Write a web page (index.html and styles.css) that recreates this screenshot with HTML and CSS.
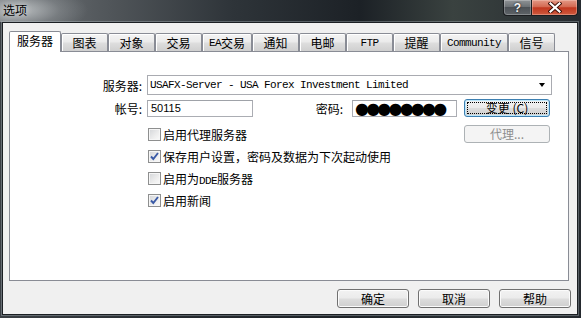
FILE: index.html
```html
<!DOCTYPE html>
<html lang="zh-CN">
<head>
<meta charset="utf-8">
<title>选项</title>
<link rel="stylesheet" href="styles.css">
</head>
<body>
<div class="window">
  <header class="titlebar">
    <span class="title">选项</span>
    <div class="caption">
      <span class="cap-btn cap-help">?</span>
      <span class="cap-btn cap-close">
        <svg width="14" height="11" viewBox="0 0 14 11"><path d="M2.5 1.5 L11.5 9.5 M11.5 1.5 L2.5 9.5" stroke="#3a0b04" stroke-width="4" stroke-linecap="square"/><path d="M2.5 1.5 L11.5 9.5 M11.5 1.5 L2.5 9.5" stroke="#ffffff" stroke-width="2.2" stroke-linecap="square"/></svg>
      </span>
    </div>
  </header>
  <main class="client">
    <nav class="tabs">
      <span class="tab active">服务器</span>
      <span class="tab">图表</span>
      <span class="tab">对象</span>
      <span class="tab">交易</span>
      <span class="tab"><span class="asc">EA</span>交易</span>
      <span class="tab">通知</span>
      <span class="tab">电邮</span>
      <span class="tab"><span class="asc">FTP</span></span>
      <span class="tab">提醒</span>
      <span class="tab"><span class="asc">Community</span></span>
      <span class="tab">信号</span>
    </nav>
    <section class="panel">
      <div class="row row-server">
        <label class="lbl">服务器:</label>
        <div class="combo">
          <span class="combo-text">USAFX-Server - USA Forex Investment Limited</span>
          <span class="combo-arrow"></span>
        </div>
      </div>
      <div class="row row-login">
        <label class="lbl">帐号:</label>
        <div class="field field-login">50115</div>
        <label class="lbl-pw">密码:</label>
        <div class="field field-pw">●●●●●●●●</div>
        <button class="btn btn-focus"><span class="focus-rect">变更 (C)</span></button>
      </div>
      <div class="row row-check">
        <span class="check"></span><span class="check-text">启用代理服务器</span>
        <button class="btn btn-disabled">代理...</button>
      </div>
      <div class="row row-check">
        <span class="check on"><svg width="11" height="11" viewBox="0 0 11 11"><path d="M2 5.5 L4.3 8 L9 2" fill="none" stroke="#3a5aa6" stroke-width="1.9"/></svg></span><span class="check-text">保存用户设置，密码及数据为下次起动使用</span>
      </div>
      <div class="row row-check">
        <span class="check"></span><span class="check-text">启用为<span class="asc">DDE</span>服务器</span>
      </div>
      <div class="row row-check">
        <span class="check on"><svg width="11" height="11" viewBox="0 0 11 11"><path d="M2 5.5 L4.3 8 L9 2" fill="none" stroke="#3a5aa6" stroke-width="1.9"/></svg></span><span class="check-text">启用新闻</span>
      </div>
    </section>
    <footer class="footer">
      <button class="btn">确定</button>
      <button class="btn">取消</button>
      <button class="btn">帮助</button>
    </footer>
  </main>
</div>
</body>
</html>
```
FILE: styles.css
```css
* { box-sizing: border-box; }
html, body { margin: 0; padding: 0; }
body {
  width: 581px;
  height: 318px;
  overflow: hidden;
  font-family: "Noto Sans CJK SC", "Liberation Sans", sans-serif;
  font-size: 12px;
  color: #000;
}
.window {
  width: 581px;
  height: 318px;
  display: flex;
  flex-direction: column;
  background: linear-gradient(to right, #3b4045 0%, #262b30 30%, #1e2328 60%, #2b3135 85%, #24292e 100%);
}
.titlebar {
  height: 22px;
  display: flex;
  justify-content: space-between;
  align-items: flex-start;
  padding: 0 3px 0 3px;
  background:
    radial-gradient(ellipse 70px 24px at 18px 10px, rgba(200,204,206,0.85), rgba(160,165,168,0.35) 60%, rgba(0,0,0,0) 100%),
    linear-gradient(to right, #74787c 0%, #52575b 18%, #2e3439 40%, #1c2126 62%, #3a4240 78%, #262b30 100%);
}
.title {
  line-height: 20px;
  font-size: 12px;
  color: #000;
  text-shadow: 0 0 6px rgba(255,255,255,0.7);
}
.caption {
  display: flex;
  height: 16px;
}
.cap-btn {
  height: 16px;
  display: flex;
  align-items: center;
  justify-content: center;
  border: 1px solid #1a1d20;
  border-top: none;
}
.cap-help {
  width: 28px;
  border-right: none;
  border-bottom-left-radius: 4px;
  background: linear-gradient(#8f9396 0%, #6c7175 45%, #4c5156 50%, #5f6468 100%);
  box-shadow: inset 0 0 0 1px rgba(255,255,255,0.25);
  color: #f4f4f4;
  font-family: "Liberation Sans", sans-serif;
  font-weight: bold;
  font-size: 12px;
  text-shadow: 0 0 2px #000;
}
.cap-close {
  width: 47px;
  border-bottom-right-radius: 4px;
  background: linear-gradient(#e39886 0%, #d46a52 45%, #c1371f 52%, #cf5a3e 100%);
  box-shadow: inset 0 0 0 1px rgba(255,220,210,0.35);
}
.client {
  margin: 0 3px 3px 2px;
  height: 293px;
  border: 1px solid #1b1f23;
  background: #f0f0f0;
  box-shadow: 0 0 0 1px rgba(190,200,205,0.35);
  display: flex;
  flex-direction: column;
}
.tabs {
  display: flex;
  align-items: flex-end;
  height: 20px;
  margin: 8px 0 0 6px;
  position: relative;
  z-index: 1;
}
.tab {
  height: 18px;
  min-width: 47px;
  padding: 0 6px;
  display: flex;
  align-items: center;
  justify-content: center;
  border: 1px solid #898c95;
  border-bottom: none;
  border-radius: 2px 2px 0 0;
  background: linear-gradient(#f4f4f4 0%, #ebebeb 45%, #dddddd 55%, #cfcfcf 100%);
  box-shadow: inset 1px 1px 0 #ffffff;
  font-size: 12px;
  line-height: 16px;
  white-space: nowrap;
}
.tab.active {
  height: 21px;
  min-width: 52px;
  margin-bottom: -1px;
  background: #ffffff;
  box-shadow: none;
  padding-bottom: 3px;
}
.asc {
  font-family: "Liberation Mono", monospace;
  font-size: 11px;
  letter-spacing: -0.6px;
}
.panel {
  margin: 0 8px 0 6px;
  height: 230px;
  border: 1px solid #898c95;
  background: #ffffff;
  display: flex;
  flex-direction: column;
}
.row {
  display: flex;
  align-items: center;
}
.row-server {
  margin-top: 23px;
  height: 20px;
}
.lbl {
  width: 132px;
  text-align: right;
  flex: none;
}
.combo {
  margin-left: 5px;
  width: 405px;
  height: 20px;
  border: 1px solid #a9abb1;
  display: flex;
  align-items: center;
  justify-content: space-between;
  padding: 0 4px 0 2px;
}
.combo-text {
  font-family: "Liberation Mono", monospace;
  font-size: 11px;
  letter-spacing: -0.6px;
  white-space: nowrap;
}
.combo-arrow {
  width: 0;
  height: 0;
  border-left: 3.5px solid transparent;
  border-right: 3.5px solid transparent;
  border-top: 4px solid #000;
  margin-right: 2px;
}
.row-login {
  margin-top: 4px;
  height: 18px;
}
.field {
  height: 17px;
  border: 1px solid #abadb3;
  border-top-color: #9fa2a8;
  background: #fff;
  display: flex;
  align-items: center;
  padding-left: 3px;
  white-space: nowrap;
  overflow: hidden;
}
.field-login {
  margin-left: 5px;
  width: 106px;
  font-family: "Liberation Sans", sans-serif;
  font-size: 11px;
}
.lbl-pw {
  width: 97px;
  text-align: right;
  padding-right: 7px;
}
.field-pw {
  margin-left: 2px;
  width: 105px;
  font-family: "DejaVu Sans", sans-serif;
  font-size: 16px;
  letter-spacing: -2.8px;
  padding-left: 2px;
}
.btn {
  font-family: "Noto Sans CJK SC", sans-serif;
  font-size: 12px;
  color: #000;
  height: 18px;
  padding: 0;
  border: 1px solid #707070;
  border-radius: 3px;
  background: linear-gradient(#f2f2f2 0%, #ebebeb 48%, #dddddd 52%, #cfcfcf 100%);
  box-shadow: inset 0 0 0 1px #fbfbfb;
  display: flex;
  align-items: center;
  justify-content: center;
  line-height: 14px;
}
.row-login .btn {
  margin-left: 7px;
  width: 86px;
}
.btn-focus {
  border-color: #3c7fb1;
  box-shadow: inset 0 0 0 1px #bde7fb;
  padding: 2px;
}
.focus-rect {
  width: 100%;
  height: 100%;
  border: 1px dotted #000;
  display: flex;
  align-items: center;
  justify-content: center;
}
.btn-disabled {
  border-color: #adb2b5;
  background: #f4f4f4;
  box-shadow: none;
  color: #8d8d8d;
}
.row-check {
  height: 22px;
  padding: 0 18px 0 138px;
}
.row-login + .row-check {
  margin-top: 6px;
}
.row-check .btn {
  margin-left: auto;
  width: 86px;
}
.check {
  width: 13px;
  height: 13px;
  flex: none;
  border: 1px solid #8e8f8f;
  background: linear-gradient(135deg, #d3d5d8 0%, #eeeeee 60%, #fafafa 100%);
  box-shadow: inset 0 0 0 1px #f6f6f6;
  margin-right: 2px;
  display: flex;
  align-items: center;
  justify-content: center;
}
.check svg { display: block; }
.check-text {
  white-space: nowrap;
}
.footer {
  display: flex;
  justify-content: flex-end;
  gap: 9px;
  margin: 8px 6px 0 0;
}
.footer .btn {
  width: 72px;
  height: 19px;
}
```
